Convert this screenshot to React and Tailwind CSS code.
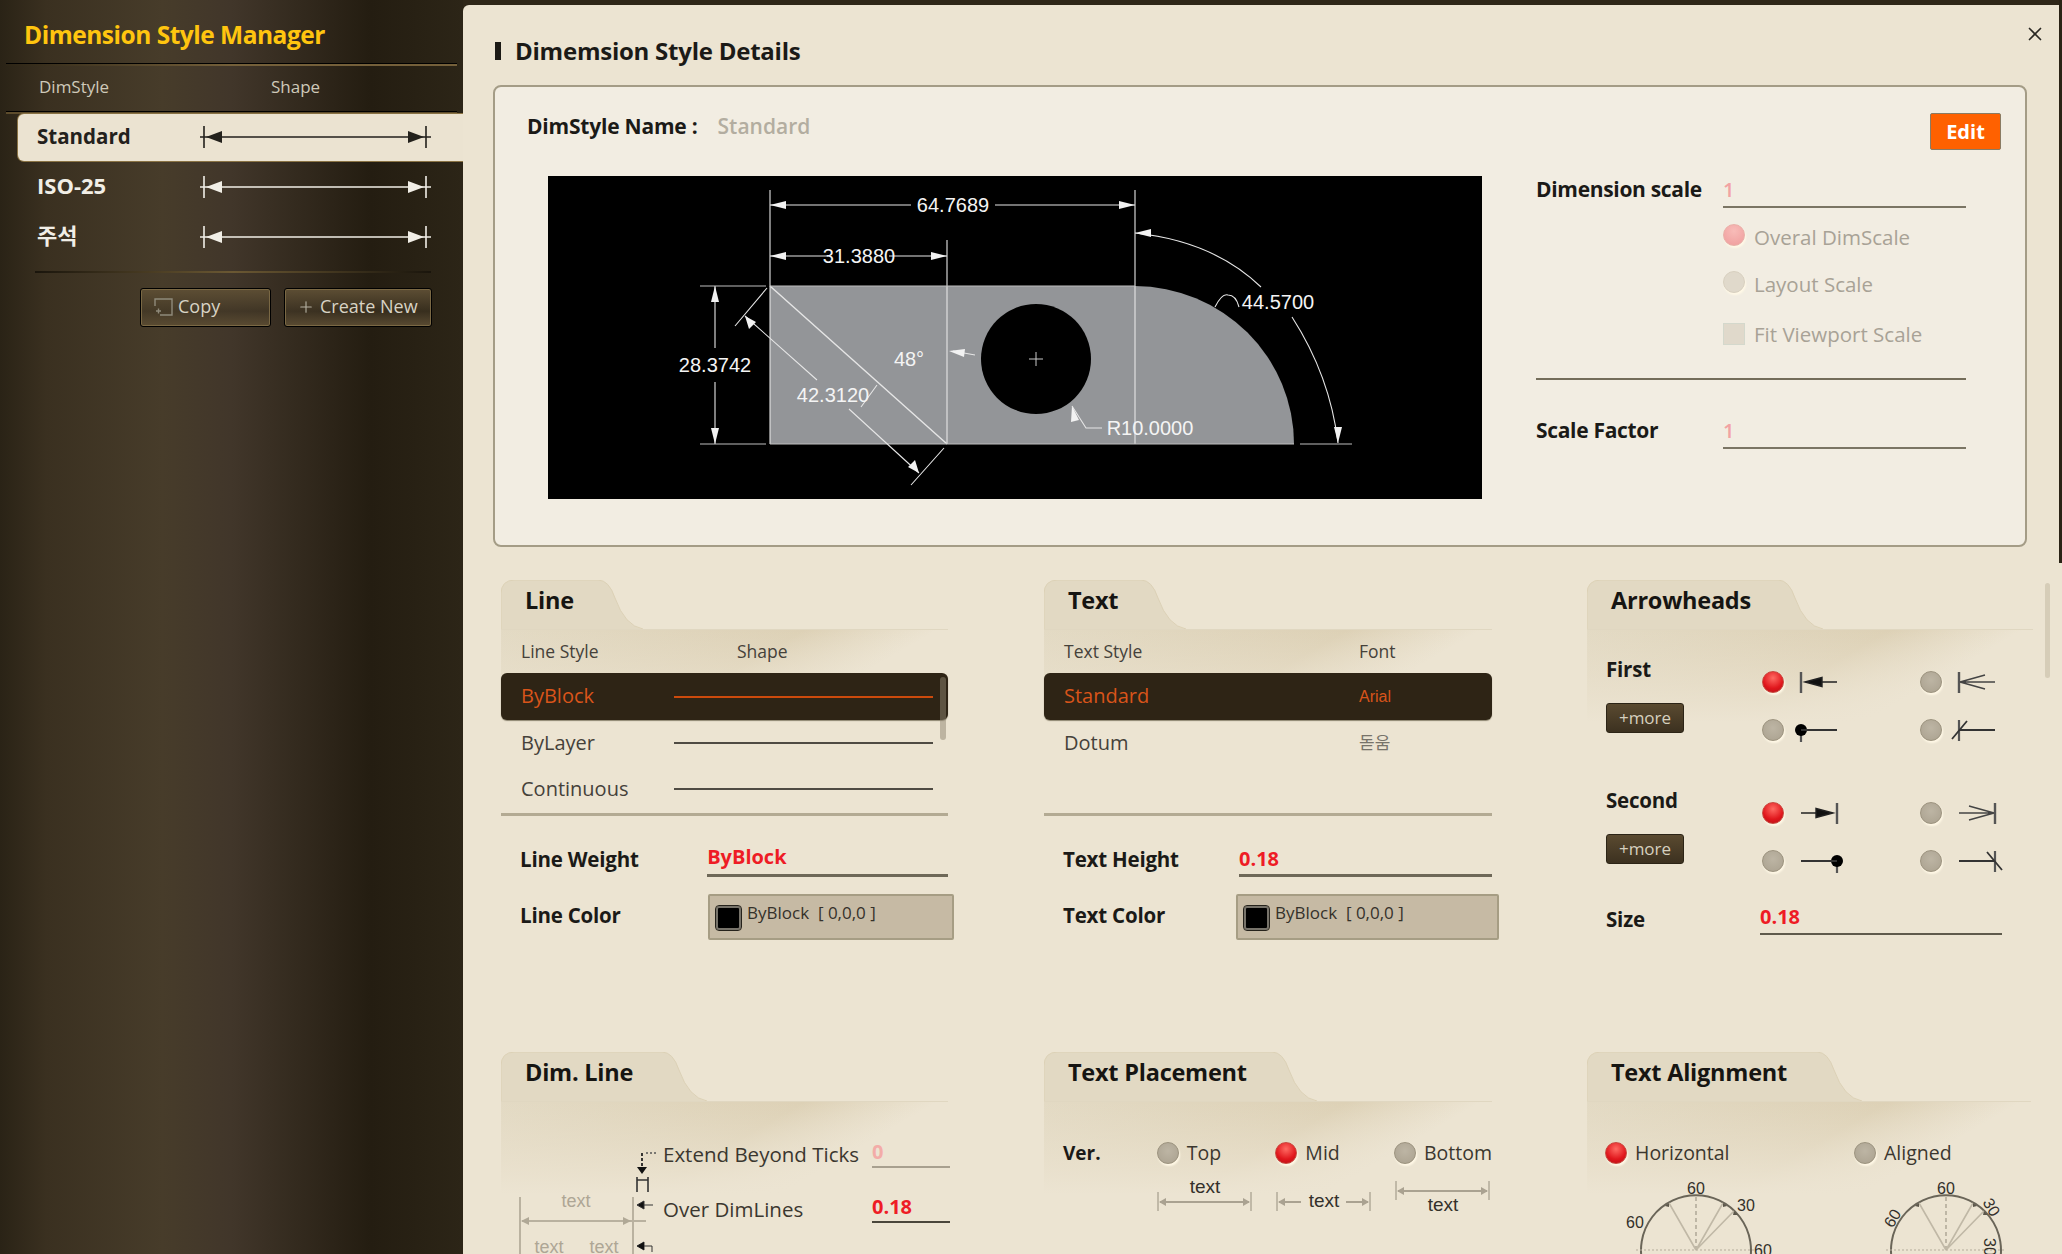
import React from "react";
import { X, Plus } from "lucide-react";

const FONT = "font-['Open_Sans','Noto_Sans_CJK_KR',sans-serif]";

const Radio = ({ on, faded }) => {
  let look = "bg-[radial-gradient(circle_at_50%_40%,#bdb5a4,#aaa18f)] border border-[#9c937f]";
  if (on) look = "bg-[radial-gradient(circle_at_50%_30%,#ff6a62,#e0161c_60%,#b01015)] border border-[#c9483f]";
  if (faded && on) look = "bg-[radial-gradient(circle_at_50%_30%,#f8bcb8,#ef9c9c)] border border-[#eab0a8]";
  if (faded && !on) look = "bg-[#e0d9cb] border border-[#d8d0c0]";
  return <span className={`block w-[22px] h-[22px] shrink-0 rounded-full shadow-[1px_2px_2px_#fff8e6] ${look}`} />;
};

const DimShape = ({ color }) => (
  <svg width="232" height="24" viewBox="0 0 232 24" className="shrink-0">
    <path d="M4 1V23M226 1V23M0 12H231" stroke={color} strokeWidth="1.6" fill="none" />
    <path d="M6 12L22 6V18ZM224 12L208 6V18Z" fill={color} />
  </svg>
);

const SideRow = ({ name }) => (
  <div className="h-[50px] flex items-center pl-[37px] text-[22px] font-bold text-[#f1eee6]">
    <span className="w-[163px] mb-[2px]">{name}</span>
    <span className="mt-[2px]">
      <DimShape color="#f1eee6" />
    </span>
  </div>
);

const SideButton = ({ icon, label, width }) => (
  <button className={`${width} h-[39px] flex items-center pl-[12px] gap-[5px] pb-[2px] rounded-[3px] border border-black bg-[linear-gradient(180deg,#5d4e34,#43382590_60%,#5a4b32)] shadow-[inset_0_0_0_1px_#7a6844] text-[18px] text-[#d8d3c4]`}>
    {icon}
    {label}
  </button>
);

const Tab = ({ title, w }) => (
  <div className="relative h-[50px]" style={{ width: w }}>
    <svg width={w} height="50" className="absolute inset-0">
      <path
        d={`M0 50V14Q0 0 14 0H${w - 45}Q${w - 34} 0 ${w - 28} 18Q${w - 18} 46 ${w} 49V50Z`}
        fill="#e2d9c3"
        stroke="#dcd1b6"
      />
    </svg>
    <span className="absolute left-[24px] top-[3px] text-[23.5px] font-bold text-[#161512] tracking-[-0.01em]">{title}</span>
  </div>
);

const Section = ({ title, tabW, lineW, children }) => (
  <section className="relative">
    <Tab title={title} w={tabW} />
    <div className="relative" style={{ width: lineW }}>
      <div className="absolute left-0 right-0 top-[-1px] h-[2px] bg-[#e0d7c1]" />
      <div className="absolute left-0 right-0 top-0 h-[92px] bg-[linear-gradient(to_bottom,#ece4d200,#ece4d2),linear-gradient(150deg,#e3dac4_0%,#ddd1b6_50%,#ece4d2_72%)]" />
      <div className="relative">{children}</div>
    </div>
  </section>
);

const LabelField = ({ label, value, labelW, valueW, lh }) => (
  <div className="h-[61px] flex items-end">
    <span className="pl-[19px] pb-[2px] text-[20.5px] font-bold text-[#1b1a17] tracking-[-0.01em]" style={{ width: labelW }}>{label}</span>
    <span className={`h-[42px] border-b-[3px] border-[#6e6858] text-[20px] font-bold text-[#ee1c25] ${lh}`} style={{ width: valueW }}>{value}</span>
  </div>
);

const ColorField = ({ label, labelW, boxW }) => (
  <div className="mt-[17px] flex items-center">
    <span className="shrink-0 pl-[19px] mb-[4px] text-[20.5px] font-bold text-[#1b1a17] tracking-[-0.01em]" style={{ width: labelW }}>{label}</span>
    <div className="shrink-0 h-[46px] flex items-start pt-[6px] pl-[6px] gap-[6px] rounded-[2px] border-2 border-[#a69d84] bg-[#c6baa4] text-[17px] leading-[22px] text-[#35312a]" style={{ width: boxW }}>
      <span className="block w-[25px] h-[24px] mt-[4px] bg-black rounded-[3px] border-2 border-[#77736a] outline outline-1 outline-[#26231c]" />
      <span>ByBlock&nbsp; [ 0,0,0 ]</span>
    </div>
  </div>
);

const ArrowIcon = ({ kind, flip }) => (
  <svg width="44" height="30" viewBox="0 0 44 30" className={`overflow-visible ${flip ? "-scale-x-100" : ""}`}>
    {kind === "solid" && (
      <>
        <path d="M4 5V26" stroke="#555" strokeWidth="2.4" />
        <path d="M8 15L25 10.5V19.5ZM25 15H40" fill="#111" stroke="#222" strokeWidth="1.4" />
      </>
    )}
    {kind === "open" && (
      <>
        <path d="M4 5V26" stroke="#555" strokeWidth="2.4" />
        <path d="M5 15L30 8M5 15H40M5 15L30 22" fill="none" stroke="#444" strokeWidth="1.5" />
      </>
    )}
    {kind === "dot" && (
      <>
        <path d="M4 15V27" stroke="#555" strokeWidth="2.2" />
        <circle cx="4" cy="15" r="6" fill="#000" />
        <path d="M4 15H40" stroke="#333" strokeWidth="1.8" />
      </>
    )}
    {kind === "tick" && (
      <>
        <path d="M4 5V26" stroke="#555" strokeWidth="2.2" />
        <path d="M-3 24L12 6M4 15H40" fill="none" stroke="#333" strokeWidth="1.8" />
      </>
    )}
  </svg>
);

const MoreButton = () => (
  <button className="mt-[20px] w-[78px] h-[30px] rounded-[3px] bg-[linear-gradient(180deg,#5a4a30,#3c3120)] border border-[#2c2416] text-[17px] leading-[26px] text-[#d6d0bf]">
    +more
  </button>
);

const ArrowBlock = ({ title, flip }) => (
  <div className="h-[131px] flex">
    <div className="w-[175px] shrink-0 pl-[19px] pt-[25px]">
      <div className="h-[28px] text-[20.5px] leading-[28px] font-bold text-[#1b1a17] tracking-[-0.01em]">{title}</div>
      <MoreButton />
    </div>
    <div className="mt-[41px] grid grid-cols-[158px_auto] gap-y-[26px] h-fit">
      {["solid", "open", "dot", "tick"].map((kind, i) => (
        <div key={kind} className="h-[22px] flex items-center gap-[13px]">
          <Radio on={i === 0} />
          <ArrowIcon kind={kind} flip={flip} />
        </div>
      ))}
    </div>
  </div>
);

const LabelRadio = ({ on, label, className }) => (
  <div className={`flex items-center gap-[8px] ${className || ""}`}>
    <Radio on={on} />
    <span className="text-[19.5px] text-[#3b372f]">{label}</span>
  </div>
);

const MiniDim = ({ lineY, textY, split }) => (
  <svg width="96" height="42" viewBox="0 0 96 42" className="text-[#2a2823]">
    <path d={`M1 ${lineY - 10}V${lineY + 9}M94 ${lineY - 10}V${lineY + 9}`} stroke="#aaa291" strokeWidth="1.3" />
    <path
      d={split ? `M3 ${lineY}H25M70 ${lineY}H92` : `M3 ${lineY}H92`}
      stroke="#aaa291"
      strokeWidth="2"
    />
    <path d={`M2 ${lineY}L9 ${lineY - 4}V${lineY + 4}ZM93 ${lineY}L86 ${lineY - 4}V${lineY + 4}Z`} fill="#aaa291" />
    <text x="48" y={textY} textAnchor="middle" fontSize="19" fill="#33302a" fontFamily="Liberation Sans">text</text>
  </svg>
);

const Dial = ({ aligned }) => (
  <svg width="160" height="90" viewBox="0 0 160 90" className="shrink-0">
    <path d="M27 90A55 55 0 1 1 133 90" fill="none" stroke="#6a6558" strokeWidth="2" />
    <path d="M80 75V20" stroke="#8f8878" strokeWidth="1" strokeDasharray="4 3" />
    <path d="M80 75L53 28M80 75L107 28M80 75L118 36" stroke="#c0b8a6" strokeWidth="1.6" />
    <path d="M20 75H140" stroke="#b5ad9b" strokeWidth="1" strokeDasharray="2 2" />
    <path d="M53 28l-4 3 4 1zM107 28l4 3-4 1zM118 36l4 4-5 0z" fill="#5c574b" />
    {!aligned ? (
      <g fontSize="16" fill="#33302a" fontFamily="Liberation Sans" textAnchor="middle">
        <text x="80" y="19">60</text>
        <text x="130" y="36">30</text>
        <text x="19" y="53">60</text>
        <text x="147" y="81">60</text>
      </g>
    ) : (
      <g fontSize="16" fill="#33302a" fontFamily="Liberation Sans" textAnchor="middle">
        <text x="80" y="19">60</text>
        <text x="126" y="38" transform="rotate(60 126 32)">30</text>
        <text x="26" y="49" transform="rotate(-60 26 43)">60</text>
        <text x="124" y="78" transform="rotate(90 124 72)">30</text>
      </g>
    )}
  </svg>
);

const DimLineDiagram = () => (
  <svg width="150" height="114" viewBox="0 0 150 114" className="shrink-0">
    <path d="M10 57V114M123 57V114" stroke="#a9a190" strokeWidth="1.5" />
    <path d="M12 81H136" stroke="#b9b19f" strokeWidth="2" />
    <path d="M11 81L19 77V85ZM121 81L113 77V85Z" fill="#b0a896" />
    <g fontSize="18" fill="#aea695" fontFamily="Liberation Sans" textAnchor="middle">
      <text x="66" y="67">text</text>
      <text x="39" y="113">text</text>
      <text x="94" y="113">text</text>
    </g>
    <path d="M132 13V29" stroke="#222" strokeWidth="1.8" strokeDasharray="3 2" />
    <path d="M136 13H146" stroke="#555" strokeWidth="1.4" strokeDasharray="2 2" />
    <path d="M132 34L127 27H137Z" fill="#111" />
    <path d="M127 37V52M138 37V52M127 40H138" stroke="#333" strokeWidth="1.6" fill="none" />
    <path d="M127 65L134 61V69ZM134 65H143" fill="#111" stroke="#333" />
    <path d="M127 106L134 102V110ZM134 106H142V112" fill="none" stroke="#333" />
    <path d="M127 106L134 102V110Z" fill="#111" />
  </svg>
);

const Drawing = () => (
  <svg width="934" height="323" viewBox="0 0 934 323" className="shrink-0 bg-black" fontFamily="Liberation Sans">
    <path d="M222 110H587A160 158 0 0 1 746 268H222Z" fill="#939598" />
    <circle cx="488" cy="183" r="55" fill="#000" />
    <path d="M481 183H495M488 176V190" stroke="#c9c9c9" strokeWidth="1" />
    <g stroke="#e6e6e6" strokeWidth="1.1" fill="none">
      <path d="M222 14V268M587 14V268M399 64V268" />
      <path d="M222 110L399 268" strokeWidth="1.4" />
      <path d="M222 29H363M447 29H587M222 80H280M341 80H399" />
      <path d="M167 110V172M167 206V268" />
      <path d="M152 110H218M152 268H218M752 268H804M222 110H587M222 268H746" stroke="#bdbdbd" />
      <path d="M219 112L187 150M396 272L363 309" />
      <path d="M197 140L269 204M301 233L371 297M329 209L313 231" />
      <path d="M405 175L427 179M524 230L538 252H554" />
      <path d="M587 57Q665 65 713 111M667 131Q674 117 680 119Q688 119 691 131M744 141Q782 200 790 267" />
    </g>
    <g fill="#f2f2f2">
      <path d="M222 29L238 25V33ZM587 29L571 25V33ZM222 80L238 76V84ZM399 80L383 76V84Z" />
      <path d="M167 110L163 126H171ZM167 268L163 252H171Z" />
      <path d="M197 140L208 146L201 153ZM371 297L360 291L367 284Z" />
      <path d="M401 175L417 173L416 181ZM524 230L531 244L523 246ZM587 57L603 53V61ZM790 267L786 251H794Z" />
    </g>
    <g fontSize="20" fill="#f4f4f4" textAnchor="middle">
      <text x="405" y="36">64.7689</text>
      <text x="311" y="87">31.3880</text>
      <text x="167" y="196">28.3742</text>
      <text x="285" y="226">42.3120</text>
      <text x="361" y="190">48°</text>
      <text x="602" y="259" >R10.0000</text>
      <text x="730" y="133">44.5700</text>
    </g>
  </svg>
);

const LineList = () => (
  <>
    <div className="h-[43px] flex items-center text-[17.5px] text-[#45413a]">
      <span className="w-[236px] pl-[20px]">Line Style</span>
      <span>Shape</span>
    </div>
    <div className="relative">
      <div className="h-[47px] flex items-center rounded-[6px] bg-[#2e2415] shadow-[0_1px_1px_#8d8570] text-[20px] text-[#d9541a]">
        <span className="w-[173px] pl-[20px] mb-[2px]">ByBlock</span>
        <span className="block w-[259px] h-[2px] bg-[#cc4a0c]" />
      </div>
      <div className="absolute right-[2px] top-[4px] w-[6px] h-[63px] rounded-full bg-[#8d846f80]" />
      <div className="h-[46px] flex items-center text-[20px] text-[#45413a]">
        <span className="w-[173px] pl-[20px]">ByLayer</span>
        <span className="block w-[259px] h-[2px] bg-[#4f4b43]" />
      </div>
      <div className="h-[46px] flex items-center text-[20px] text-[#45413a]">
        <span className="w-[173px] pl-[20px]">Continuous</span>
        <span className="block w-[259px] h-[2px] bg-[#4f4b43]" />
      </div>
    </div>
    <div className="mt-[1px] h-[3px] bg-[#b3aa93]" />
  </>
);

const TextList = () => (
  <>
    <div className="h-[43px] flex items-center text-[17.5px] text-[#45413a]">
      <span className="w-[315px] pl-[20px]">Text Style</span>
      <span>Font</span>
    </div>
    <div className="h-[47px] flex items-center rounded-[6px] bg-[#2e2415] shadow-[0_1px_1px_#8d8570] text-[#d9541a]">
      <span className="w-[315px] pl-[20px] text-[20px] mb-[2px]">Standard</span>
      <span className="text-[16px] font-['Liberation_Sans']">Arial</span>
    </div>
    <div className="h-[46px] flex items-center text-[#45413a]">
      <span className="w-[315px] pl-[20px] text-[20px]">Dotum</span>
      <span className="text-[17px] text-[#77736a]">돋움</span>
    </div>
    <div className="h-[46px]" />
    <div className="mt-[1px] h-[3px] bg-[#b3aa93]" />
  </>
);

const DimValue = ({ value, tone, mt }) => (
  <span className={`block w-[78px] h-[28px] border-b-2 text-[20px] leading-[24px] font-bold ${mt} ${tone}`}>{value}</span>
);

const App = () => {
  return (
    <div className={`relative flex h-[1254px] w-[2062px] overflow-hidden bg-[#2f2718] ${FONT}`}>
      {/* left list */}
      <aside className="w-[463px] shrink-0 h-full bg-[linear-gradient(90deg,#2a2316_0%,#3a3020_10%,#473c2a_35%,#41362a_50%,#241d11_80%,#2c2517_100%)]">
        <div className="h-[63px] flex items-center pl-[24px] pt-[8px] text-[24.5px] font-bold tracking-[-0.02em] text-[#ffc50f]">
          Dimension Style Manager
        </div>
        <div className="mx-[6px] h-[3px] border-t border-black bg-[linear-gradient(90deg,#2e2617,#75603a_50%,#75603a)]" />
        <div className="h-[45px] flex items-center pb-[4px] text-[17px] text-[#cfc9b9]">
          <span className="w-[271px] pl-[39px]">DimStyle</span>
          <span>Shape</span>
        </div>
        <div className="mx-[6px] h-[3px] border-t border-black bg-[#5d4c2c]" />
        <div className="ml-[18px] h-[47px] flex items-center pl-[19px] pb-[2px] rounded-l-[6px] bg-[#ebe3d1] shadow-[0_0_0_1px_#8a7344] text-[20.5px] font-bold text-[#23211c]">
          <span className="w-[163px]">Standard</span>
          <DimShape color="#23211c" />
        </div>
        <SideRow name="ISO-25" />
        <SideRow name="주석" />
        <div className="mt-[10px] ml-[35px] w-[396px] h-[2px] bg-[linear-gradient(90deg,#1a150c,#6b5833_50%,#1a150c)]" />
        <div className="mt-[15px] ml-[140px] flex gap-[13px]">
          <SideButton
            width="w-[131px]"
            label="Copy"
            icon={
              <svg width="20" height="18" viewBox="0 0 20 18" fill="none" stroke="#8f8a7b" strokeWidth="1.4">
                <path d="M2 8V1H19V17H7" />
                <path d="M3 13H8M5.5 10.5V15.5" />
              </svg>
            }
          />
          <SideButton width="w-[148px]" label="Create New" icon={<Plus size={18} strokeWidth={1.5} color="#b5b0a1" />} />
        </div>
      </aside>

      {/* details */}
      <main className="relative mt-[5px] flex-1 rounded-tl-[6px] bg-[#ece4d2]">
        <div className="h-[80px] flex pl-[32px] pr-[17px]">
          <div className="flex items-center gap-[14px] pt-[12px]">
            <span className="block w-[6px] h-[18px] bg-[#1c1a15]" />
            <h1 className="text-[24px] font-bold tracking-[-0.01em] text-[#1b1a17]">Dimemsion Style Details</h1>
          </div>
          <X size={22} strokeWidth={1.8} className="ml-auto mt-[18px] mr-[-1px] text-[#2a2823]" />
        </div>

        <div className="ml-[30px] w-[1534px] h-[462px] rounded-[8px] border-2 border-[#a49c86] bg-[#f2ede2] pt-[26px]">
          <div className="flex justify-between pl-[32px] pr-[24px]">
            <div className="flex items-center h-[24px] gap-[20px] mt-[2px]">
              <span className="text-[21px] font-bold text-[#1b1a17] tracking-[-0.01em]">DimStyle Name :</span>
              <span className="text-[21px] font-semibold text-[#b3ada0]">Standard</span>
            </div>
            <button className="w-[71px] h-[37px] rounded-[2px] border border-[#8a7b63] bg-[#ff6100] text-[20px] font-bold text-white">
              Edit
            </button>
          </div>
          <div className="mt-[26px] flex pl-[53px]">
            <Drawing />
            <div className="ml-[54px] w-[430px]">
              <div className="h-[32px] flex">
                <span className="w-[187px] text-[21px] leading-[26px] font-bold text-[#1b1a17] tracking-[-0.015em]">Dimension scale</span>
                <span className="flex-1 border-b-2 border-[#7b7564] text-[20px] leading-[28px] font-semibold text-[#f2a3a3]">1</span>
              </div>
              <div className="pl-[187px] text-[20.5px] leading-[24px] text-[#a8a296]">
                <div className="mt-[15px] h-[24px] flex items-center gap-[9px]">
                  <Radio on faded />
                  <span className="mt-[4px]">Overal DimScale</span>
                </div>
                <div className="mt-[23px] h-[24px] flex items-center gap-[9px]">
                  <Radio faded />
                  <span className="mt-[3px]">Layout Scale</span>
                </div>
                <div className="mt-[28px] h-[24px] flex items-center gap-[9px]">
                  <span className="block w-[22px] h-[22px] bg-[#e0d9cb] border border-[#d4d8cc]" />
                  <span>Fit Viewport Scale</span>
                </div>
              </div>
              <div className="mt-[32px] h-[2px] bg-[#746d5a]" />
              <div className="mt-[37px] h-[32px] flex">
                <span className="w-[187px] text-[21px] leading-[26px] font-bold text-[#1b1a17] tracking-[-0.015em]">Scale Factor</span>
                <span className="flex-1 border-b-2 border-[#7b7564] text-[20px] leading-[28px] font-semibold text-[#f2a3a3]">1</span>
              </div>
            </div>
          </div>
        </div>

        <div className="mt-[33px] pl-[38px] grid grid-cols-[543px_543px_1fr] grid-rows-[472px_auto]">
          <Section title="Line" tabW={142} lineW={447}>
            <LineList />
            <LabelField label="Line Weight" value="ByBlock" labelW={207} valueW={242} lh="leading-[44px]" />
            <ColorField label="Line Color" labelW={207} boxW={246} />
          </Section>

          <Section title="Text" tabW={142} lineW={448}>
            <TextList />
            <LabelField label="Text Height" value="0.18" labelW={195} valueW={253} lh="leading-[48px]" />
            <ColorField label="Text Color" labelW={192} boxW={263} />
          </Section>

          <Section title="Arrowheads" tabW={236} lineW={446}>
            <ArrowBlock title="First" />
            <ArrowBlock title="Second" flip />
            <div className="h-[43px] flex items-end">
              <span className="w-[173px] pl-[19px] text-[20.5px] leading-[32px] font-bold text-[#1b1a17] tracking-[-0.01em]">Size</span>
              <span className="w-[242px] h-[42px] border-b-[2px] border-[#5f5a4c] text-[20px] leading-[48px] font-bold text-[#ee1c25]">0.18</span>
            </div>
          </Section>

          <Section title="Dim. Line" tabW={206} lineW={447}>
            <div className="h-[152px] flex pt-[38px] pl-[9px]">
              <DimLineDiagram />
              <div className="ml-[3px] grid grid-cols-[209px_78px] content-start text-[20.5px] text-[#3b372f]">
                <span className="h-[28px] leading-[28px]">Extend Beyond Ticks</span>
                <DimValue value="0" tone="border-[#a8a08f] text-[#f3aca8]" mt="" />
                <span className="mt-[27px] h-[28px] leading-[28px]">Over DimLines</span>
                <DimValue value="0.18" tone="border-[#4a463b] text-[#ee1c25]" mt="mt-[27px]" />
                <span className="mt-[27px] h-[28px]" />
                <DimValue value="0.38" tone="border-[#a8a08f] text-[#f3aca8]" mt="mt-[27px]" />
              </div>
            </div>
          </Section>

          <Section title="Text Placement" tabW={273} lineW={448}>
            <div className="pt-[39px]">
              <div className="h-[24px] flex items-center pl-[19px]">
                <span className="w-[94px] text-[19px] font-bold text-[#1b1a17]">Ver.</span>
                <LabelRadio label="Top" className="w-[119px]" />
                <LabelRadio on label="Mid" className="w-[119px]" />
                <LabelRadio label="Bottom" />
              </div>
              <div className="mt-[9px] ml-[113px] grid grid-cols-[119px_119px_96px]">
                <MiniDim lineY={28} textY={19} />
                <MiniDim lineY={28} textY={33} split />
                <MiniDim lineY={17} textY={37} />
              </div>
            </div>
          </Section>

          <Section title="Text Alignment" tabW={275} lineW={444}>
            <div className="pt-[39px]">
              <div className="h-[24px] flex items-center pl-[18px]">
                <LabelRadio on label="Horizontal" className="w-[249px]" />
                <LabelRadio label="Aligned" />
              </div>
              <div className="mt-[10px] ml-[29px] flex gap-[90px]">
                <Dial />
                <Dial aligned />
              </div>
            </div>
          </Section>
        </div>

        {/* page scroll thumb */}
        <div className="absolute right-[12px] top-[578px] w-[5px] h-[95px] rounded-full bg-[#d6cdb8]" />
      </main>

      {/* thin dark window edge */}
      <div className="absolute right-0 top-0 w-[3px] h-[563px] bg-[#2a2315]" />
    </div>
  );
};

export default App;
